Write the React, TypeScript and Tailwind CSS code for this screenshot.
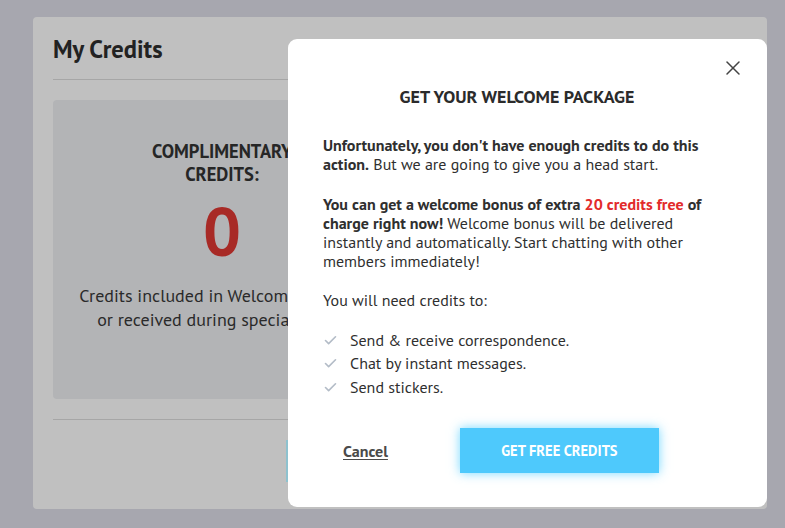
import { Check, X } from "lucide-react";

const font = { fontFamily: "'PT Sans', Lato, 'Open Sans', sans-serif" };

function WelcomeModal() {
  return (
    <div className="absolute left-[288px] top-[39px] w-[479px] h-[468px] bg-white rounded-[9px] pl-[35px] pr-[50px] pt-[47px]">
      <button className="absolute right-[22px] top-[17px] text-[#444]" aria-label="Close">
        <X size={24} strokeWidth={1.5} />
      </button>
      <h2 className="pr-[6px] text-center text-[18px] font-bold text-[#2b2b2b] leading-[22px]">
        GET YOUR WELCOME PACKAGE
      </h2>
      <div className="mt-[28px] text-[16px] leading-[19.3px] text-[#2f2f2f]">
        <p>
          <b>Unfortunately, you don't have enough credits to do this action.</b> But we are going to give you a head start.
        </p>
        <p className="mt-[20px]">
          <b>
            You can get a welcome bonus of extra <span className="text-[#e22b2b]">20 credits free</span> of charge right now!
          </b>{" "}
          Welcome bonus will be delivered instantly and automatically. Start chatting with other members immediately!
        </p>
        <p className="mt-[19.5px]">You will need credits to:</p>
        <ul className="mt-[20px] flex flex-col gap-[4.3px]">
          {["Send & receive correspondence.", "Chat by instant messages.", "Send stickers."].map((item) => (
            <li key={item} className="flex items-center gap-[12px]">
              <Check size={15} strokeWidth={2.6} className="text-[#b3bcc7]" />
              <span>{item}</span>
            </li>
          ))}
        </ul>
      </div>
      <div className="mt-[31px] flex items-center">
        <button className="ml-[20px] text-[16px] font-bold text-[#4a4a4a] underline underline-offset-2">Cancel</button>
        <button className="ml-[72px] w-[199px] h-[45px] bg-[#4ec9fc] text-white text-[14.5px] font-bold shadow-[0_0_10px_rgba(60,200,255,0.7)]">
          GET FREE CREDITS
        </button>
      </div>
    </div>
  );
}

export default function App() {
  return (
    <div className="relative w-full h-[528px] bg-[#a7a7af] pt-[17px] pl-[33px] overflow-hidden" style={font}>
      <div className="w-[734px] h-[492px] bg-[#c0c0c0] rounded-[4px] px-[20px] pt-[17px]">
        <h1 className="text-[24.5px] font-bold text-[#222] leading-[30px]">My Credits</h1>
        <div className="mt-[15px] border-t border-[#a6a6a6]" />
        <div className="mt-[20px] w-[338px] h-[299px] bg-[#b3b4b6] rounded-[4px] px-[10px] pt-[40px] text-center">
          <div className="mx-auto w-[150px] text-[18.5px] font-bold leading-[23px] text-[#262626]">COMPLIMENTARY CREDITS:</div>
          <div className="mt-[8px] text-[67px] font-bold leading-[74px] text-[#a82a26]">0</div>
          <p className="mt-[16px] text-[18px] leading-[24px] text-[#2a2a2a]">
            Credits included in Welcome Package
            <br />
            or received during special offers.
          </p>
        </div>
        <div className="mt-[20px] border-t border-[#a6a6a6]" />
        <div className="mt-[20px] ml-[233px] w-[200px] h-[42px] bg-[#8ec2cf]" />
      </div>
      <WelcomeModal />
    </div>
  );
}
